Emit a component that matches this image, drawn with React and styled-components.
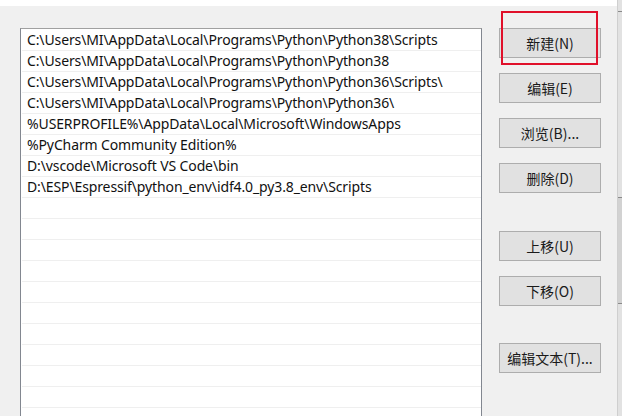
import React from "react";
import styled, { createGlobalStyle } from "styled-components";

const GlobalStyle = createGlobalStyle`
  html, body {
    margin: 0;
    padding: 0;
    background: #f0f0f0;
  }
  * {
    box-sizing: border-box;
  }
`;

const paths = [
  "C:\\Users\\MI\\AppData\\Local\\Programs\\Python\\Python38\\Scripts",
  "C:\\Users\\MI\\AppData\\Local\\Programs\\Python\\Python38",
  "C:\\Users\\MI\\AppData\\Local\\Programs\\Python\\Python36\\Scripts\\",
  "C:\\Users\\MI\\AppData\\Local\\Programs\\Python\\Python36\\",
  "%USERPROFILE%\\AppData\\Local\\Microsoft\\WindowsApps",
  "%PyCharm Community Edition%",
  "D:\\vscode\\Microsoft VS Code\\bin",
  "D:\\ESP\\Espressif\\python_env\\idf4.0_py3.8_env\\Scripts",
];

const buttons = [
  { label: "新建(N)", gap: 0, marked: true },
  { label: "编辑(E)", gap: 15 },
  { label: "浏览(B)...", gap: 15 },
  { label: "删除(D)", gap: 15 },
  { label: "上移(U)", gap: 38 },
  { label: "下移(O)", gap: 15 },
  { label: "编辑文本(T)...", gap: 37 },
];

const App = () => {
  const rows = [...paths, ...Array(12).fill("")];
  return (
    <Page>
      <GlobalStyle />
      <Main>
        <TopStrip />
        <Body>
          <List>
            {rows.map((p, i) => (
              <Row key={i}>{p}</Row>
            ))}
          </List>
          <Buttons>
            {buttons.map((b) => (
              <Button key={b.label} $gap={b.gap}>
                {b.label}
                {b.marked && <Highlight />}
              </Button>
            ))}
          </Buttons>
        </Body>
      </Main>
      <EdgeStrip>
        <EdgeMark $h={11} />
        <EdgeMark $h={186} $line />
        <EdgeMark $h={106} $line $dark />
        <EdgeMark $h={113} $line />
      </EdgeStrip>
    </Page>
  );
};

export default App;

const Page = styled.div`
  width: 622px;
  height: 416px;
  display: flex;
  overflow: hidden;
  background: #f0f0f0;
  font-family: "Noto Sans", "Noto Sans CJK SC", sans-serif;
`;

const Main = styled.div`
  width: 617px;
  display: flex;
  flex-direction: column;
`;

const TopStrip = styled.div`
  height: 6px;
  background: #ffffff;
`;

const Body = styled.div`
  flex: 1;
  display: flex;
  padding: 22px 0 0 20px;
  min-height: 0;
`;

const List = styled.div`
  width: 462px;
  height: 420px;
  background: #ffffff;
  border: 1px solid #828790;
  border-top-color: #a0a0a0;
  border-bottom: none;
  padding-top: 1px;
  overflow: hidden;
`;

const Row = styled.div`
  height: 21px;
  margin-left: 1px;
  padding-left: 5px;
  border-bottom: 1px solid #efefef;
  font-size: 14px;
  line-height: 20px;
  letter-spacing: -0.12px;
  color: #111;
  white-space: nowrap;
`;

const Buttons = styled.div`
  display: flex;
  flex-direction: column;
  margin-left: 17px;
`;

const Button = styled.div`
  position: relative;
  width: 102px;
  height: 30px;
  margin-top: ${(p) => p.$gap}px;
  background: #e1e1e1;
  border: 1px solid #adadad;
  display: flex;
  align-items: center;
  justify-content: center;
  font-family: "Noto Sans CJK SC", sans-serif;
  font-size: 14px;
  color: #1a1a1a;
`;

const Highlight = styled.div`
  position: absolute;
  left: 1px;
  top: -18px;
  width: 97px;
  height: 54px;
  border: 2px solid #e0102a;
`;

const EdgeStrip = styled.div`
  width: 5px;
  display: flex;
  flex-direction: column;
  background: #e2e2e2;
  border-left: 1px solid #cfcfcf;
`;

const EdgeMark = styled.div`
  height: ${(p) => p.$h}px;
  border-top: ${(p) => (p.$line ? "1px solid #8a8a8a" : "none")};
  background: ${(p) => (p.$dark ? "#d2d2d2" : "transparent")};
`;
